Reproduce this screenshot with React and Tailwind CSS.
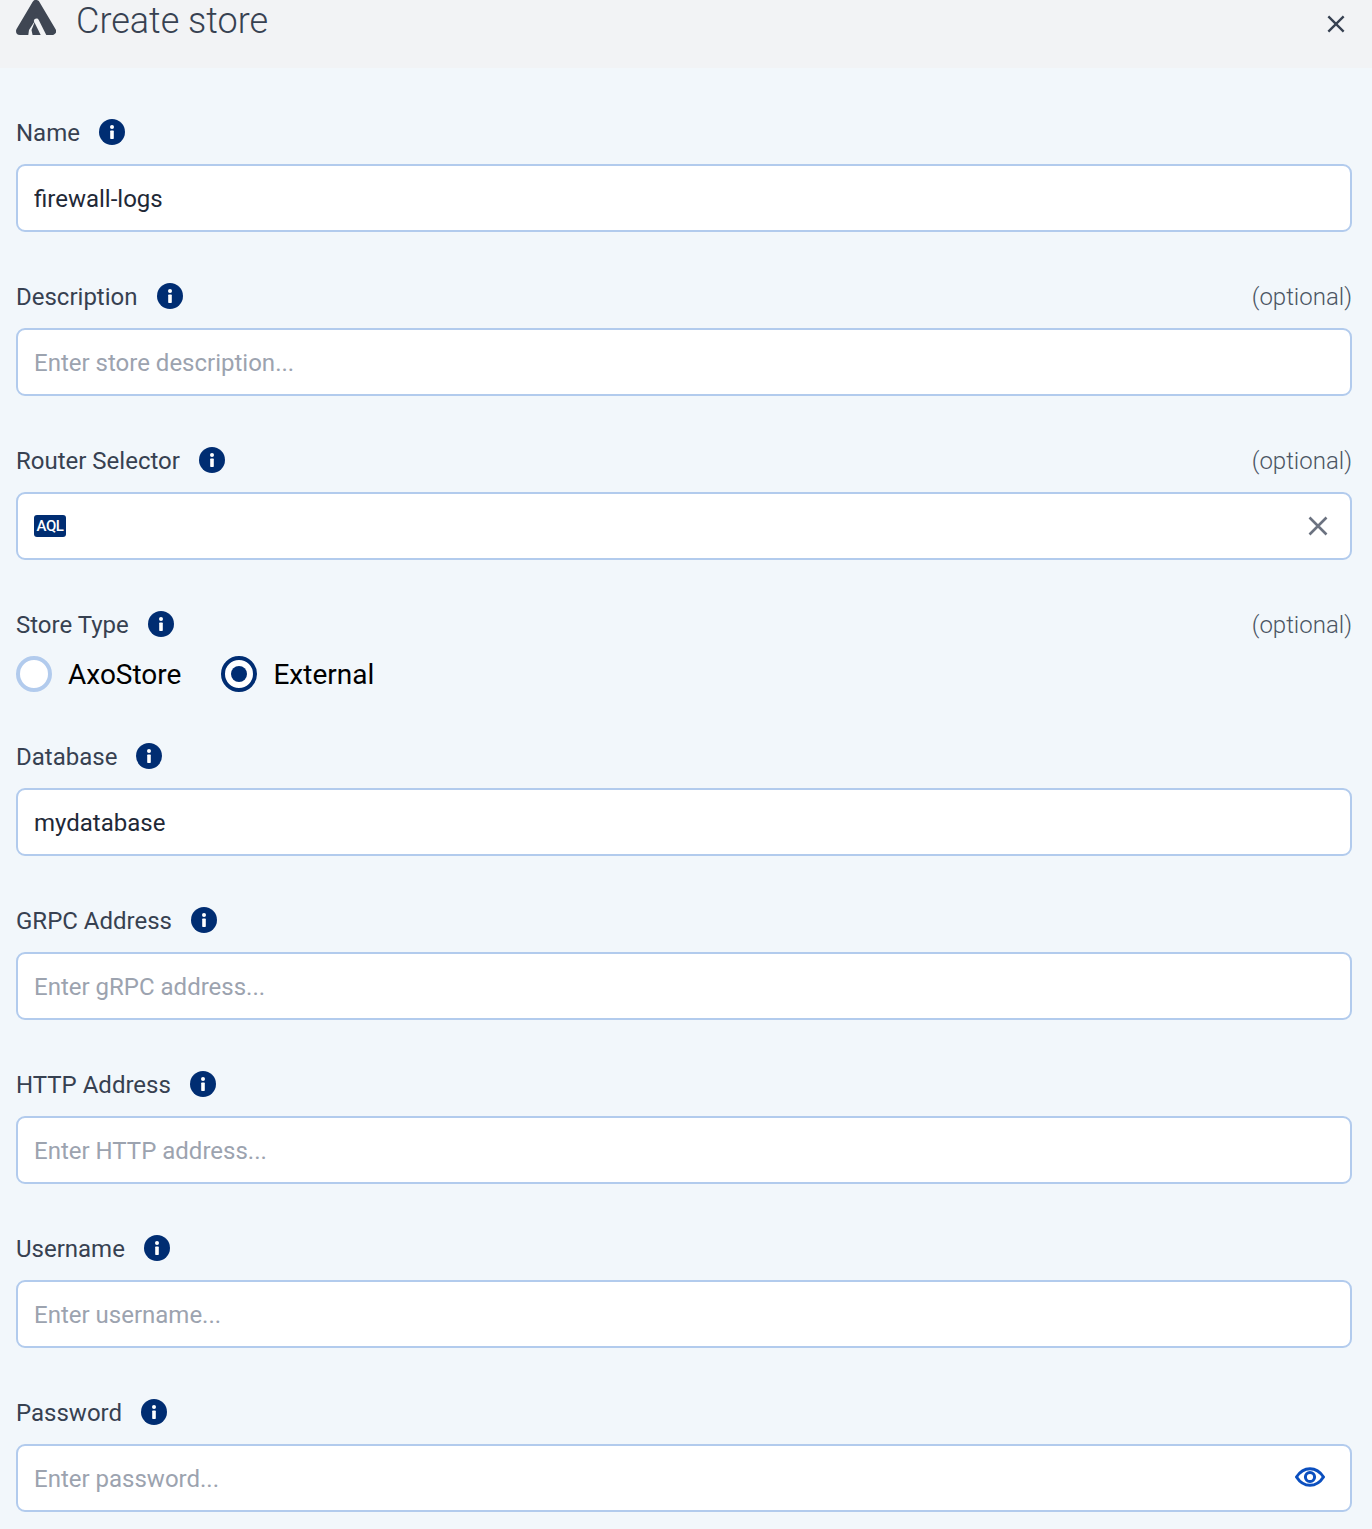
import React from "react";

function InfoIcon() {
  return (
    <svg width="26" height="26" viewBox="0 0 26 26" className="shrink-0">
      <circle cx="13" cy="13" r="13" fill="#002d72" />
      <circle cx="13" cy="8" r="2" fill="#fff" />
      <rect x="11.2" y="11.5" width="3.6" height="8.5" rx="0.7" fill="#fff" />
    </svg>
  );
}

function Logo() {
  return (
    <svg width="40" height="36" viewBox="0 0 40 36" className="shrink-0">
      <path d="M4 31 L20 4 L36 31 Z" fill="#3f4653" stroke="#3f4653" strokeWidth="8" strokeLinejoin="round" />
      <path d="M20.5 21 L28.5 37" fill="none" stroke="#f2f3f5" strokeWidth="5" strokeLinecap="round" />
      <path d="M19.5 20 L13 30 L12 37 L17 37 L15.5 30 Z" fill="#f2f3f5" />
    </svg>
  );
}

function CloseIcon({ size, color }) {
  return (
    <svg width={size} height={size} viewBox="0 0 20 20" fill="none" stroke={color} strokeWidth="2.6" className="shrink-0">
      <path d="M1.5 1.5 L18.5 18.5 M18.5 1.5 L1.5 18.5" />
    </svg>
  );
}

function EyeIcon() {
  return (
    <svg width="30" height="20" viewBox="0 0 30 20" fill="none" stroke="#0b4fbf" strokeWidth="3" className="mr-[25px] mb-[2px] shrink-0">
      <path d="M1.5 10 C5 4.5 10 1.7 15 1.7 C20 1.7 25 4.5 28.5 10 C25 15.5 20 18.3 15 18.3 C10 18.3 5 15.5 1.5 10 Z" strokeLinejoin="round" />
      <circle cx="15" cy="10" r="4.6" />
    </svg>
  );
}

function Field({ label, optional, children }) {
  return (
    <div className="flex flex-col gap-[14px]">
      <div className="flex h-9 items-center justify-between pt-[2px]">
        <div className="flex items-center gap-[19px]">
          <span className="text-[24px] leading-8 text-[#374151]">{label}</span>
          <span className="-mt-[2px]">
            <InfoIcon />
          </span>
        </div>
        {optional && <span className="text-[24px] leading-8 font-light text-[#4b5563]">(optional)</span>}
      </div>
      {children}
    </div>
  );
}

function TextBox({ value, placeholder, left, right }) {
  return (
    <div className="flex h-[68px] items-center rounded-[9px] border-2 border-[#b2cbed] bg-white pl-4">
      {left}
      <input
        readOnly
        value={value || ""}
        placeholder={placeholder}
        className="w-full bg-transparent pt-[2px] text-[24px] text-[#1f2937] outline-none placeholder:text-[#9ca3af]"
      />
      {right}
    </div>
  );
}

function Radio({ label, checked }) {
  return (
    <label className="flex items-center gap-4">
      {checked ? (
        <span className="flex h-9 w-9 items-center justify-center rounded-full border-[4px] border-[#002d72] bg-white">
          <span className="h-[16px] w-[16px] rounded-full bg-[#002d72]" />
        </span>
      ) : (
        <span className="h-9 w-9 rounded-full border-[4px] border-[#b2cbed] bg-white" />
      )}
      <span className="pt-[2px] text-[28px] leading-9 text-black">{label}</span>
    </label>
  );
}

export default function App() {
  return (
    <div className="min-h-[1529px] bg-[#f2f7fb] font-['Roboto',sans-serif]">
      <header className="flex h-[68px] items-start justify-between overflow-hidden bg-[#f2f3f5] pl-4 pr-[27px]">
        <div className="flex items-start gap-5">
          <Logo />
          <h1 className="mt-[1px] text-[36px] leading-10 font-light text-[#374151]">Create store</h1>
        </div>
        <button className="mt-[15px]">
          <CloseIcon size={18} color="#374151" />
        </button>
      </header>

      <form className="flex flex-col gap-[46px] px-[20px] pl-4 pt-[46px] pb-[17px]">
        <Field label="Name">
          <TextBox value="firewall-logs" />
        </Field>
        <Field label="Description" optional>
          <TextBox placeholder="Enter store description..." />
        </Field>
        <Field label="Router Selector" optional>
          <TextBox
            left={
              <span className="flex h-[22px] w-8 shrink-0 items-center justify-center rounded-[3px] bg-[#002d72] text-[15px] font-medium tracking-[-0.5px] text-white">
                AQL
              </span>
            }
            right={
              <span className="mr-[22px]">
                <CloseIcon size={20} color="#6b7280" />
              </span>
            }
          />
        </Field>
        <Field label="Store Type" optional>
          <div className="flex h-9 items-center gap-10">
            <Radio label="AxoStore" />
            <Radio label="External" checked />
          </div>
        </Field>
        <Field label="Database">
          <TextBox value="mydatabase" />
        </Field>
        <Field label="GRPC Address">
          <TextBox placeholder="Enter gRPC address..." />
        </Field>
        <Field label="HTTP Address">
          <TextBox placeholder="Enter HTTP address..." />
        </Field>
        <Field label="Username">
          <TextBox placeholder="Enter username..." />
        </Field>
        <Field label="Password">
          <TextBox placeholder="Enter password..." right={<EyeIcon />} />
        </Field>
      </form>
    </div>
  );
}
